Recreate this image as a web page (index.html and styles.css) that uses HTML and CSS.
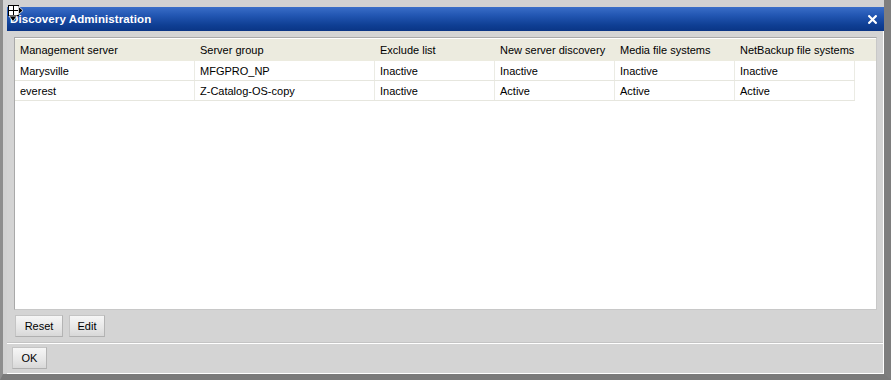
FILE: index.html
```html
<!DOCTYPE html>
<html>
<head>
<meta charset="utf-8">
<link rel="stylesheet" href="styles.css">
</head>
<body>
<div class="frame">
  <svg class="move-icon" width="18" height="20" viewBox="0 0 18 20">
    <rect x="2.5" y="1.5" width="10" height="10" fill="#fff" stroke="#000"/>
    <line x1="7.5" y1="1.5" x2="7.5" y2="11.5" stroke="#000"/>
    <line x1="2.5" y1="6.5" x2="12.5" y2="6.5" stroke="#000"/>
    <path d="M12.5 2.5 L17 6.5 L12.5 10.5 Z" fill="#000" stroke="#fff" stroke-width="0.8"/>
    <path d="M3 12 L11 12 L7 17.5 Z" fill="#000" stroke="#fff" stroke-width="0.8"/>
  </svg>
  <div class="dialog">
    <div class="titlebar">
      <span class="title">Discovery Administration</span>
      <svg class="close" width="9" height="9" viewBox="0 0 9 9">
        <path d="M1.2 1.2 L7.8 7.8 M7.8 1.2 L1.2 7.8" stroke="#fff" stroke-width="2.2" stroke-linecap="square"/>
      </svg>
    </div>
    <div class="body">
      <div class="content">
        <div class="panel">
          <div class="thead">
            <div class="row">
              <div class="cell w180">Management server</div>
              <div class="cell w180">Server group</div>
              <div class="cell w120">Exclude list</div>
              <div class="cell w120">New server discovery</div>
              <div class="cell w120">Media file systems</div>
              <div class="cell w120">NetBackup file systems</div>
            </div>
          </div>
          <div class="tbody">
            <div class="row">
              <div class="cell w180">Marysville</div>
              <div class="cell w180">MFGPRO_NP</div>
              <div class="cell w120">Inactive</div>
              <div class="cell w120">Inactive</div>
              <div class="cell w120">Inactive</div>
              <div class="cell w120">Inactive</div>
            </div>
            <div class="row">
              <div class="cell w180">everest</div>
              <div class="cell w180">Z-Catalog-OS-copy</div>
              <div class="cell w120">Inactive</div>
              <div class="cell w120">Active</div>
              <div class="cell w120">Active</div>
              <div class="cell w120">Active</div>
            </div>
          </div>
        </div>
        <div class="actions">
          <button class="btn btn-reset">Reset</button>
          <button class="btn btn-edit">Edit</button>
        </div>
      </div>
      <div class="separator"></div>
      <div class="footer">
        <button class="btn btn-ok">OK</button>
      </div>
    </div>
  </div>
</div>
</body>
</html>
```
FILE: styles.css
```css
* { box-sizing: border-box; }
html, body {
  margin: 0;
  padding: 0;
  width: 891px;
  height: 380px;
  overflow: hidden;
  background: #d4d4d4;
  font-family: "Liberation Sans", Arial, sans-serif;
  font-size: 11px;
  color: #000;
}
.frame {
  position: relative;
  width: 891px;
  height: 380px;
  background: #d2d2d2;
  border-left: 3px solid #8e8e8e;
  border-right: 7px solid #7e7e7e;
  border-bottom: 6px solid #7a7a7a;
  padding: 7px 0 0 4px;
}
.move-icon {
  position: absolute;
  left: 3px;
  top: 4px;
}
.dialog {
  width: 877px;
  height: 367px;
  display: flex;
  flex-direction: column;
}
.titlebar {
  height: 24px;
  flex: none;
  background: linear-gradient(#3a6ec8 0%, #2256b2 35%, #0f3f94 75%, #0a3585 100%);
  display: flex;
  align-items: center;
  justify-content: space-between;
  padding: 0 7px 0 3px;
}
.title {
  color: #fff;
  font-weight: bold;
  font-size: 11.5px;
  letter-spacing: 0.1px;
}
.close { display: block; margin-top: 1px; }
.body {
  flex: 1;
  background: #d4d4d4;
  border-right: 1px solid #fff;
  border-bottom: 1px solid #fff;
  display: flex;
  flex-direction: column;
}
.content {
  padding: 6px 6px 0 7px;
}
.panel {
  height: 273px;
  background: #fff;
  border: 1px solid #a9a9a9;
  border-right-color: #c8c8c8;
  border-bottom-color: #c8c8c8;
  padding-top: 1px;
}
.thead {
  background: #ecebdf;
  height: 22px;
}
.row {
  display: flex;
  width: 840px;
}
.thead .row { height: 22px; }
.tbody .row {
  height: 20px;
  border-bottom: 1px solid #e6e6de;
}
.cell {
  padding-left: 5px;
  display: flex;
  align-items: center;
  white-space: nowrap;
  overflow: hidden;
}
.tbody .cell { border-right: 1px solid #ebebe4; }
.w180 { width: 180px; }
.w120 { width: 120px; }
.actions {
  display: flex;
  gap: 6px;
  padding: 5px 0 5px 1px;
}
.btn {
  height: 22px;
  margin: 0;
  padding: 0;
  font-family: "Liberation Sans", Arial, sans-serif;
  font-size: 11px;
  color: #000;
  background: linear-gradient(#f6f6f6 0%, #e6e6e6 60%, #d8d8d8 100%);
  border: 1px solid #c4c4c4;
  border-right-color: #b4b4b4;
  border-bottom-color: #b0b0b0;
  border-radius: 0;
}
.btn-reset { width: 48px; }
.btn-edit { width: 36px; }
.btn-ok { width: 35px; }
.separator {
  height: 2px;
  border-top: 1px solid #c4c4c4;
  border-bottom: 1px solid #fff;
}
.footer {
  padding: 3px 0 0 5px;
}
```
